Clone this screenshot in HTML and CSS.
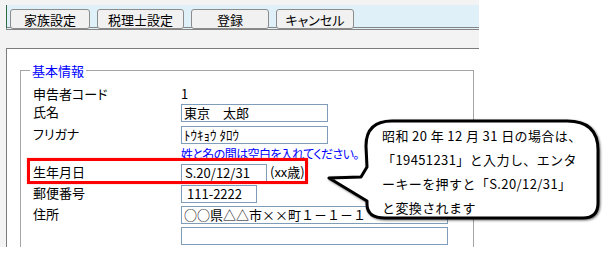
FILE: index.html
```html
<!DOCTYPE html>
<html lang="ja">
<head>
    <meta charset="UTF-8">
    <title>基本情報</title>
    <link rel="stylesheet" href="styles.css">
</head>
<body>
    <div class="screen">
        <div class="app">
            <div class="toolbar">
                <button class="btn btn-family">家族設定</button>
                <button class="btn btn-tax">税理士設定</button>
                <button class="btn btn-save">登録</button>
                <button class="btn btn-cancel">キャンセル</button>
            </div>
            <div class="panel">
                <fieldset class="basic">
                    <legend>基本情報</legend>
                    <div class="row row-code">
                        <span class="label">申告者コード</span>
                        <span class="value">1</span>
                    </div>
                    <div class="row row-name">
                        <span class="label">氏名</span>
                        <span class="box box-name">東京　太郎</span>
                    </div>
                    <div class="row row-kana">
                        <span class="label">フリガナ</span>
                        <span class="box box-name">ﾄｳｷｮｳ ﾀﾛｳ</span>
                    </div>
                    <div class="row row-note">
                        <span class="label"></span>
                        <span class="note">姓と名の間は空白を入れてください。</span>
                    </div>
                    <div class="row row-birth">
                        <span class="label">生年月日</span>
                        <span class="box box-birth">S.20/12/31</span>
                        <span class="age">(xx歳)</span>
                        <!-- 赤枠の注釈 -->
                        <div class="highlight"></div>
                    </div>
                    <div class="row">
                        <span class="label">郵便番号</span>
                        <span class="box box-zip">111-2222</span>
                    </div>
                    <div class="row">
                        <span class="label">住所</span>
                        <span class="box box-addr">○○県△△市××町１－１－１</span>
                    </div>
                    <div class="row">
                        <span class="label"></span>
                        <span class="box box-addr"></span>
                    </div>
                </fieldset>
            </div>
        </div>

        <!-- 吹き出し -->
        <div class="bubble">
            <svg class="bubble-shape" width="285" height="108" viewBox="0 0 285 108">
                <path d="M70,5 L245,5 Q276,5 276,34 L276,87 Q276,102 261,102 L63,102 Q45,102 45,88 L45,85 L7,62 L39,61 L45,51 L44,30 Q44,5 70,5 Z"
                      fill="#fff" stroke="#000" stroke-width="3" stroke-linejoin="round"/>
            </svg>
            <p class="bubble-text">昭和 20 年 12 月 31 日の場合は、<br>「19451231」と入力し、エンタ<br>ーキーを押すと「S.20/12/31」<br>と変換されます</p>
        </div>
    </div>
</body>
</html>
```

FILE: styles.css
```css
body {
    margin: 0;
    background-color: #fff;
    font-family: "Noto Sans CJK JP", sans-serif;
    font-size: 13px;
    color: #000;
}

.screen {
    position: relative;
    width: 615px;
    height: 264px;
    overflow: hidden;
}

.app {
    width: 479px;
    height: 247px;
    background-color: #f3f3f3;
    overflow: hidden;
}

/* ツールバー */
.toolbar {
    display: flex;
    align-items: flex-start;
    gap: 7px;
    margin: 5px 0 0 6px;
    height: 25px;
    padding: 4px 0 0 3px;
    box-sizing: border-box;
    background-color: #dff0f8;
    border-left: 1px solid #2f6b45;
    border-bottom: 3px double #858585;
}

.btn {
    height: 20px;
    padding: 0;
    border: 1px solid #8c8c8c;
    border-radius: 3px;
    background-color: #f1f1f1;
    font-family: inherit;
    font-size: 13px;
    line-height: 17px;
    color: #000;
    font-feature-settings: "palt";
}

.btn-family { width: 80px; }
.btn-tax { width: 87px; }
.btn-save { width: 78px; }
.btn-cancel { width: 78px; }

/* 白いパネル */
.panel {
    margin: 18px 0 0 6px;
    height: 300px;
    background-color: #fff;
    border-top: 1px solid #7c7c7c;
    border-left: 1px solid #7c7c7c;
}

.basic {
    width: 454px;
    box-sizing: border-box;
    margin: 14px 0 0 13px;
    padding: 8px 0 0 12px;
    height: 260px;
    border: 1px solid #a5a5a5;
    font-feature-settings: "palt";
}

.basic legend {
    margin-left: -3px;
    padding: 0 2px;
    line-height: 15px;
    color: #0000ff;
}

.row {
    display: flex;
    align-items: flex-start;
    height: 18px;
    margin-bottom: 3px;
}

.row-code {
    height: 15px;
    margin-bottom: 3px;
}

.row-name {
    margin-bottom: 4px;
}

.row-note {
    height: 14px;
    margin-bottom: 3px;
}

.label {
    width: 148px;
    flex-shrink: 0;
    line-height: 15px;
}

.value {
    line-height: 15px;
}

.box {
    height: 18px;
    box-sizing: border-box;
    padding-left: 2px;
    border: 1px solid #7f9db9;
    background-color: #fff;
    line-height: 16px;
    white-space: nowrap;
    overflow: hidden;
    font-feature-settings: normal;
}

.box-name { width: 147px; }
.box-birth { width: 86px; padding-left: 3px; }
.box-zip { width: 76px; padding-left: 5px; }
.box-addr { width: 267px; }

.note {
    color: #0000ff;
    font-size: 12px;
    letter-spacing: -0.6px;
    line-height: 14px;
    white-space: nowrap;
}

.age {
    margin-left: 3px;
    line-height: 16px;
}

.row-birth {
    position: relative;
}

.highlight {
    position: absolute;
    left: -6px;
    top: -6px;
    width: 281px;
    height: 26px;
    box-sizing: border-box;
    border: 3px solid #ff0000;
    box-shadow: 0 0 1px #ff8080;
}

/* 吹き出し */
.bubble {
    position: absolute;
    left: 322px;
    top: 116px;
    width: 285px;
    height: 108px;
}

.bubble-shape {
    position: absolute;
    left: 0;
    top: 0;
    filter: drop-shadow(1.5px 1.5px 1px rgba(0, 0, 0, 0.55));
}

.bubble-text {
    position: relative;
    margin: 0;
    padding: 8px 0 0 60px;
    line-height: 24px;
    letter-spacing: 0.4px;
    white-space: nowrap;
}
```
